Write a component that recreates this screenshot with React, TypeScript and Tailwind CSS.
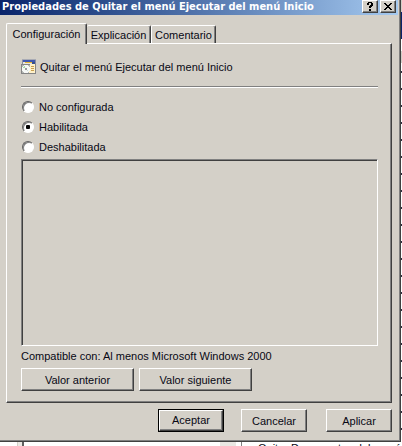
import type { ReactNode } from 'react';

const raised =
  'border border-t-white border-l-white border-r-[#404040] border-b-[#404040] shadow-[inset_-1px_-1px_0_#808080]';

function PushButton({ children, className = '' }: { children: ReactNode; className?: string }) {
  return (
    <button type="button" className={`h-[23px] bg-[#d4d0c8] text-center leading-[20px] ${raised} ${className}`}>
      {children}
    </button>
  );
}

function Option({ label, checked = false }: { label: string; checked?: boolean }) {
  return (
    <label className="flex h-5 items-center gap-[5px]">
      <input
        type="radio"
        name="state"
        defaultChecked={checked}
        className="size-3 appearance-none rounded-full border border-t-[#606060] border-l-[#606060] border-r-white border-b-white bg-white shadow-[inset_1px_1px_0_#808080] checked:bg-[radial-gradient(circle,#000_2px,#fff_2.5px)]"
      />
      <span>{label}</span>
    </label>
  );
}

function PolicyIcon() {
  return (
    <svg width="16" height="16" viewBox="0 0 16 16" shapeRendering="crispEdges" aria-hidden="true">
      <path d="M1 0h14v1H1z" fill="#a9abb5" />
      <path d="M2 1h12v2H2z" fill="#3f58b0" />
      <path d="M1 1h1v5H1zM14 1h1v4h-1z" fill="#8c8f9c" />
      <path d="M2 3h12v2H2z" fill="#e9e6dc" />
      <path d="M4 3h7v1H4z" fill="#e6b632" />
      <path d="M11 3h3v2h-3z" fill="#35508f" />
      <path d="M0 5h15v10H0z" fill="#858585" />
      <path d="M1 6h8v8H1z" fill="#b5b8b5" />
      <path d="M3 6h4v1h1v1h1v4H8v1H7v1H3v-1H2v-1H1V8h1V7h1z" fill="#f6f8f6" />
      <path d="M2 8h1v1H2zm1-1h1v2H3z" fill="#a6dba8" />
      <path d="M6 11h1v1H6z" fill="#c9d9cb" />
      <path d="M4 9h2v2H4z" fill="#9a9a9a" />
      <path d="M9 5h5v9H8v-2h1z" fill="#fff1c8" />
      <path d="M10 7h3v1h-3zm0 2h3v1h-3zm0 2h3v1h-3z" fill="#c9a04e" />
    </svg>
  );
}

export default function App() {
  return (
    <div className="overflow-hidden bg-white font-['Liberation_Sans',Arial,sans-serif] text-[11px] text-[#080814]">
      <div className="flex">
        <main className="flex min-w-0 grow flex-col border-r border-b border-[#404040] bg-[#d4d0c8] pr-[2px] shadow-[inset_-1px_-1px_0_#808080]">
          <header className="flex h-[15px] items-start bg-linear-to-r from-[#0a246a] to-[#a6caf0]">
            <h1 className="min-w-0 grow pl-[2px] font-['DejaVu_Sans_Condensed','Noto_Sans',sans-serif] text-[11px] leading-[13px] font-bold whitespace-nowrap text-white">
              Propiedades de Quitar el menú Ejecutar del menú Inicio
            </h1>
            <div className="flex shrink-0 gap-[2px] pr-[2px]">
              <button type="button" aria-label="Ayuda" className={`flex h-[13px] w-4 items-center justify-center bg-[#d4d0c8] text-black ${raised}`}>
                <svg width="7" height="9" viewBox="0 0 7 9" shapeRendering="crispEdges" aria-hidden="true">
                  <path d="M1 0h4v1h1v3H5v1H4v1H2V4h1V3h1V1H2v2H0V1h1zM2 7h2v2H2z" fill="currentColor" />
                </svg>
              </button>
              <button type="button" aria-label="Cerrar" className={`flex h-[13px] w-4 items-center justify-center bg-[#d4d0c8] text-black ${raised}`}>
                <svg width="8" height="7" viewBox="0 0 8 7" shapeRendering="crispEdges" aria-hidden="true">
                  <path d="M0 0h2v1h1v1h2V1h1V0h2v1H7v1H6v1H5v1h1v1h1v1h1v1H6V6H5V5H3v1H2v1H0V6h1V5h1V4h1V3H2V2H1V1H0z" fill="currentColor" />
                </svg>
              </button>
            </div>
          </header>

          <div className="flex flex-col px-[6px] pt-2 pb-[9px]">
            <div role="tablist" className="flex h-5 items-end">
              <button type="button" role="tab" aria-selected="true" className="relative z-10 -mb-px h-[21px] w-[81px] rounded-t-[2px] border border-b-0 border-t-white border-l-white border-r-[#404040] bg-[#d4d0c8] pb-[1px] leading-4 shadow-[inset_-1px_0_0_#808080]">
                Configuración
              </button>
              <button type="button" role="tab" aria-selected="false" className="h-[18px] w-16 rounded-t-[2px] border border-b-0 border-l-0 border-t-white border-r-[#404040] leading-4 shadow-[inset_-1px_0_0_#808080]">
                Explicación
              </button>
              <button type="button" role="tab" aria-selected="false" className="h-[18px] w-[65px] rounded-t-[2px] border border-b-0 border-t-white border-l-white border-r-[#404040] leading-4 shadow-[inset_-1px_0_0_#808080]">
                Comentario
              </button>
            </div>

            <section role="tabpanel" className={`flex flex-col pr-[13px] pb-[11px] pl-[14px] ${raised}`}>
              <div className="mt-[15px] flex h-4 items-center gap-[3px]">
                <PolicyIcon />
                <h2>Quitar el menú Ejecutar del menú Inicio</h2>
              </div>
              <hr className="mt-[11px] h-[2px] border-t border-b border-t-[#808080] border-b-white" />
              <fieldset className="mt-[9px] pl-[1px]">
                <Option label="No configurada" />
                <Option label="Habilitada" checked />
                <Option label="Deshabilitada" />
              </fieldset>
              <div className="mt-[2px] h-[187px] border border-t-[#808080] border-l-[#808080] border-r-white border-b-white shadow-[inset_1px_1px_0_#404040]" />
              <p className="mt-[2px] h-4 leading-4">Compatible con: Al menos Microsoft Windows 2000</p>
              <div className="mt-1 flex gap-[5px]">
                <PushButton className="w-[113px]">Valor anterior</PushButton>
                <PushButton className="w-[113px]">Valor siguiente</PushButton>
              </div>
            </section>

            <footer className="mt-[6px] flex justify-end">
              <div className="mr-[17px] border border-black">
                <button type="button" className={`block h-[21px] w-16 bg-[#d4d0c8] ${raised}`}>Aceptar</button>
              </div>
              <PushButton className="mr-[19px] w-[66px]">Cancelar</PushButton>
              <PushButton className="w-[66px]">Aplicar</PushButton>
            </footer>
          </div>
        </main>
        <div className="flex w-px shrink-0 flex-col">
          <div className="h-3 bg-[#d4d0c8]" />
          <div className="h-[27px] bg-[#0a246a]" />
          <div className="h-3" />
          <div className="h-3 bg-[#d4d0c8]" />
          <div className="mt-2 grow bg-[repeating-linear-gradient(#303040_0_2px,#fff_2px_17px)]" />
        </div>
      </div>
      <div className="flex h-1 overflow-hidden">
        <div className="ml-[17px] w-[7px] shrink-0 border-r-2 border-l border-l-[#d4d0c8] border-r-[#606060] bg-[#ebe9e4]" />
        <div className="grow" />
        <div className="h-1 w-4 shrink-0 bg-[#e9e7e3]" />
        <div className="ml-[5px] w-[161px] shrink-0 border-l border-[#808080] pl-4 leading-3 whitespace-nowrap">Quitar Documentos del menú Inicio</div>
      </div>
    </div>
  );
}
